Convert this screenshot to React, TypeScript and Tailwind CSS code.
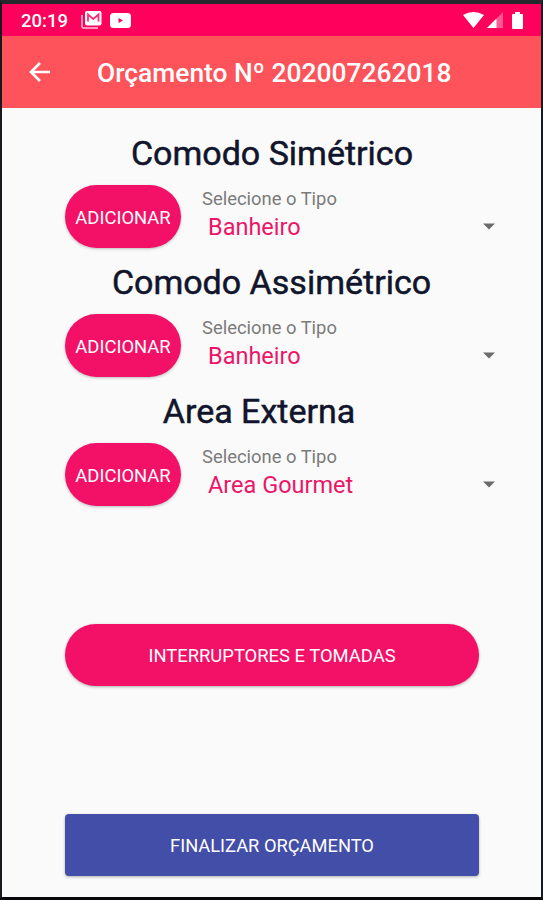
import { FC } from "react";

const sections = [
  { title: "Comodo Simétrico", value: "Banheiro", titleClass: "pl-px" },
  { title: "Comodo Assimétrico", value: "Banheiro", titleClass: "" },
  { title: "Area Externa", value: "Area Gourmet", titleClass: "pr-[25px]" },
];

const StatusBar: FC = () => (
  <div className="h-8 shrink-0 bg-[#ff005c] text-white flex items-center pl-[19px] pr-[18px]">
    <span className="w-[60px] pt-[3px] text-[18.5px] font-medium">20:19</span>
    <svg width="21" height="18" viewBox="0 0 21 18" fill="none">
      <path d="M1 4v11.500q0 1.500 1.500 1.500H17" stroke="#ffc4d8" strokeWidth="1.500" />
      <rect x="4" y="0" width="16.500" height="14.500" rx="2" fill="white" />
      <path d="M7 10.500V3.500l5.250 4.500L17.500 3.500v7" stroke="#ff2e76" strokeWidth="1.800" />
    </svg>
    <svg className="ml-2" width="21" height="15" viewBox="0 0 21 15">
      <rect width="21" height="15" rx="3.500" fill="white" />
      <path d="M8.500 5v5l4.500-2.500z" fill="#ff005c" />
    </svg>
    <svg className="ml-auto" width="21" height="16" viewBox="0 0 21 16" fill="white">
      <path d="M0 3Q10.500-3 21 3L10.500 16z" />
    </svg>
    <svg className="ml-[3px]" width="16" height="16" viewBox="0 0 16 16" fill="white">
      <path d="M0 16L16 0v16z" opacity=".35" />
      <path d="M0 16L9.500 6.500V16z" />
    </svg>
    <svg className="ml-[9px]" width="11" height="17" viewBox="0 0 11 17" fill="white">
      <path d="M3 0h5v2h2q1 0 1 1v13q0 1-1 1H1q-1 0-1-1V3q0-1 1-1h2z" />
    </svg>
  </div>
);

const App: FC = () => {
  return (
    <div className="w-[543px] h-[900px] bg-[#fafafa] border-t-4 border-x-2 border-b-[3px] border-t-[#25282d] border-x-[#16191e] border-b-[#08080a] font-[Roboto,sans-serif] flex flex-col overflow-hidden">
      <StatusBar />
      <header className="h-[72px] shrink-0 bg-[#ff535b] text-white flex items-center pl-[27px]">
        <svg width="21" height="20" viewBox="0 0 21 20" fill="none" stroke="white" strokeWidth="2.600">
          <path d="M11 1L2 10l9 9M2 10h19" />
        </svg>
        <h1 className="ml-[47px] pt-[3px] text-[26.400px] font-medium whitespace-nowrap">
          Orçamento Nº 202007262018
        </h1>
      </header>
      <main className="pt-[22px] flex flex-col">
        {sections.map((s) => (
          <section key={s.title} className="h-[129px]">
            <h2
              className={`h-[46px] leading-[46px] text-center text-[34px] text-[#11152b] [-webkit-text-stroke:0.5px_#11152b] ${s.titleClass}`}
            >
              {s.title}
            </h2>
            <div className="flex pl-[63px]">
              <button className="mt-[9px] w-[116px] h-[63px] pt-0.5 rounded-full bg-[#f31067] text-white text-[18.400px] shadow-[0_1px_3px_rgba(0,0,0,0.25)]">
                ADICIONAR
              </button>
              <div className="ml-[21px] pt-[10px] w-[273px]">
                <p className="text-[18.400px] leading-[26px] text-[#7b7b7b]">Selecione o Tipo</p>
                <p className="ml-1.5 text-[23.500px] leading-[30px] text-[#ec1568]">{s.value}</p>
              </div>
              <svg className="ml-2 mt-[47px]" width="12" height="7" viewBox="0 0 12 7">
                <path d="M0 0.500h12L6 6.500z" fill="#6b6b6b" />
              </svg>
            </div>
          </section>
        ))}
      </main>
      <button className="mx-[63px] mt-[107px] w-[414px] h-[62px] pt-0.5 shrink-0 rounded-full bg-[#f31067] text-white text-[18.400px] shadow-[0_1px_3px_rgba(0,0,0,0.3)]">
        INTERRUPTORES E TOMADAS
      </button>
      <button className="mx-[63px] mt-[128px] w-[414px] h-[62px] pt-0.5 shrink-0 rounded bg-[#434ea9] text-white text-[18.300px] shadow-[0_1px_3px_rgba(0,0,0,0.3)]">
        FINALIZAR ORÇAMENTO
      </button>
    </div>
  );
};

export default App;
